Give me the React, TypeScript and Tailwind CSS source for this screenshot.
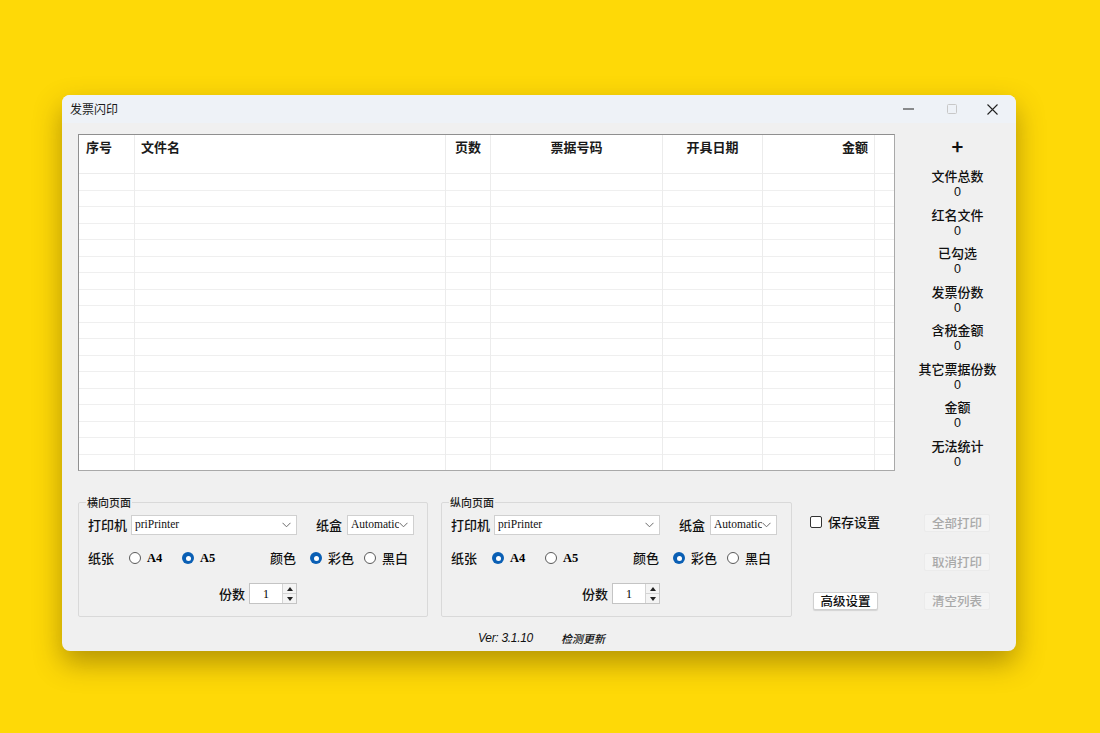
import type { ReactNode } from 'react';

const CJK = '[font-family:"Noto_Sans_CJK_SC","Noto_Sans",sans-serif]';

const columns = [
  { w: 'w-[56px]', label: '序号', align: 'justify-start pl-[7px]' },
  { w: 'w-[311px]', label: '文件名', align: 'justify-start pl-[6px]' },
  { w: 'w-[45px]', label: '页数', align: 'justify-end pr-[9px]' },
  { w: 'w-[172px]', label: '票据号码', align: 'justify-center' },
  { w: 'w-[100px]', label: '开具日期', align: 'justify-center' },
  { w: 'w-[112px]', label: '金额', align: 'justify-end pr-[6px]' },
  { w: 'flex-1', label: '', align: '' },
];

const stats = ['文件总数', '红名文件', '已勾选', '发票份数', '含税金额', '其它票据份数', '金额', '无法统计'];

const rows = Array.from({ length: 18 }, (_, i) => i);

function Chevron() {
  return (
    <svg width="9" height="6" viewBox="0 0 9 6" className="shrink-0">
      <path d="M0.5 0.8 L4.5 4.8 L8.5 0.8" fill="none" stroke="#6b6b6b" strokeWidth="1" />
    </svg>
  );
}

function Select({ value, w }: { value: string; w: string }) {
  return (
    <div
      className={`${w} flex h-[20px] items-center overflow-hidden border border-[#d0d0d0] bg-white pl-[3px] pr-[5px]`}
    >
      <span className="flex-1 overflow-hidden whitespace-nowrap text-[11.5px] leading-none text-[#111] [font-family:'Liberation_Serif',serif]">
        {value}
      </span>
      <Chevron />
    </div>
  );
}

function Radio({ checked, label, w }: { checked: boolean; label: ReactNode; w: string }) {
  return (
    <div className={`${w} flex items-center gap-[6px]`}>
      {checked ? (
        <span className="flex h-[12px] w-[12px] items-center justify-center rounded-full bg-[#0a5fb4]">
          <span className="h-[5px] w-[5px] rounded-full bg-white" />
        </span>
      ) : (
        <span className="h-[12px] w-[12px] rounded-full border border-[#5a5a5a] bg-white" />
      )}
      {label}
    </div>
  );
}

function Spin() {
  return (
    <div className="flex h-[21px] w-[48px] border border-[#c4c4c4] bg-white">
      <span className="flex flex-1 items-center justify-center text-[12px] [font-family:'Liberation_Serif',serif]">1</span>
      <div className="flex w-[14px] flex-col border-l border-[#d4d4d4] bg-[#f4f4f4]">
        <span className="flex flex-1 items-center justify-center border-b border-[#d4d4d4]">
          <svg width="6" height="4" viewBox="0 0 6 4">
            <path d="M0 4 L3 0 L6 4 Z" fill="#222" />
          </svg>
        </span>
        <span className="flex flex-1 items-center justify-center">
          <svg width="6" height="4" viewBox="0 0 6 4">
            <path d="M0 0 L3 4 L6 0 Z" fill="#222" />
          </svg>
        </span>
      </div>
    </div>
  );
}

const latin = "text-[12.5px] font-bold [font-family:'Liberation_Serif',serif]";
const lbl = 'text-[13px] font-medium text-[#111]';

function PageGroup({ title, a4 }: { title: string; a4: boolean }) {
  return (
    <fieldset className="h-[122px] rounded-[2px] border border-[#d9d9d9] px-[9px] pb-[12px]">
      <legend className="ml-[-2px] px-[1px] text-[11px] font-medium leading-[14px] text-[#222]">{title}</legend>
      <div className="mt-[6px] flex h-[20px] items-center">
        <span className={`${lbl} w-[43px]`}>打印机</span>
        <Select value="priPrinter" w="w-[166px]" />
        <span className={`${lbl} ml-[19px] w-[31px]`}>纸盒</span>
        <Select value="Automatic" w="w-[67px]" />
      </div>
      <div className="mt-[13px] flex h-[20px] items-center">
        <span className={`${lbl} w-[41px]`}>纸张</span>
        <Radio checked={a4} w="w-[53px]" label={<span className={latin}>A4</span>} />
        <Radio checked={!a4} w="w-[88px]" label={<span className={latin}>A5</span>} />
        <span className={`${lbl} w-[40px]`}>颜色</span>
        <Radio checked w="w-[54px]" label={<span className={lbl}>彩色</span>} />
        <Radio checked={false} w="w-[54px]" label={<span className={lbl}>黑白</span>} />
      </div>
      <div className="mt-[15px] flex h-[21px] items-center pl-[131px]">
        <span className={`${lbl} w-[30px]`}>份数</span>
        <Spin />
      </div>
    </fieldset>
  );
}

function Btn({ children, disabled }: { children: ReactNode; disabled?: boolean }) {
  return (
    <div
      className={
        disabled
          ? 'flex h-[18px] w-[66px] items-center justify-center rounded-[2px] border border-[#ebebeb] bg-[#f4f4f4] text-[12.5px] font-medium text-[#a9a9a9]'
          : 'flex h-[18px] w-[65px] items-center justify-center rounded-[2px] border border-[#d0d0d0] bg-white text-[12.5px] font-medium text-[#111] shadow-[0_1px_1px_rgba(0,0,0,0.12)]'
      }
    >
      {children}
    </div>
  );
}

export default function App() {
  return (
    <div className={`h-[733px] w-[1100px] overflow-hidden bg-[#fed907] pl-[62px] pt-[95px] ${CJK}`}>
      <div className="flex h-[556px] w-[954px] flex-col overflow-hidden rounded-[8px] bg-[#f0f0f0] shadow-[0_12px_28px_rgba(90,65,0,0.45)]">
        {/* title bar */}
        <div className="flex h-[28px] items-center bg-[#eef2f7] pl-[8px]">
          <span className="flex-1 text-[12px] text-[#1b1b1b]">发票闪印</span>
          <div className="flex h-full items-center">
            <span className="flex w-[43px] justify-center">
              <svg width="11" height="2" viewBox="0 0 11 2">
                <rect width="11" height="1" y="0.5" fill="#222" />
              </svg>
            </span>
            <span className="flex w-[43px] justify-center">
              <svg width="10" height="10" viewBox="0 0 10 10">
                <rect x="0.5" y="0.5" width="9" height="9" rx="1" fill="none" stroke="#c8c8c8" />
              </svg>
            </span>
            <span className="flex w-[43px] justify-center pr-[4px]">
              <svg width="11" height="11" viewBox="0 0 11 11">
                <path d="M0.5 0.5 L10.5 10.5 M10.5 0.5 L0.5 10.5" stroke="#222" strokeWidth="1.1" />
              </svg>
            </span>
          </div>
        </div>

        <div className="flex flex-1 flex-col pl-[16px]">
          {/* table + stats */}
          <div className="mt-[11px] flex h-[337px]">
            <div className="flex h-full w-[817px] overflow-hidden border border-[#a9a9a9] border-l-[#8f8f8f] border-t-[#8f8f8f] bg-white">
              {columns.map((c, ci) => (
                <div key={ci} className={`${c.w} flex shrink-0 flex-col border-r border-[#ececec] last:border-r-0`}>
                  <div
                    className={`flex h-[39px] shrink-0 items-start border-b border-[#ececec] pt-[4px] ${c.align} text-[13px] font-bold leading-[16px] text-[#1a1a1a]`}
                  >
                    {c.label}
                  </div>
                  {rows.map((r) => (
                    <div key={r} className="h-[16.5px] shrink-0 border-b border-[#efefef]" />
                  ))}
                </div>
              ))}
            </div>
            <div className="flex flex-1 flex-col items-center pl-[4px]">
              <div className="mt-[2px] flex h-[26px] items-center text-[20px] font-bold leading-none text-[#111]">+</div>
              <div className="mt-[11px] flex flex-col items-center">
                {stats.map((s) => (
                  <div key={s} className="flex h-[38.5px] flex-col items-center">
                    <span className="text-[13px] font-medium leading-[17px] text-[#111]">{s}</span>
                    <span className="text-[12.5px] leading-[16px] text-[#111] [font-family:'Liberation_Sans',sans-serif]">0</span>
                  </div>
                ))}
              </div>
            </div>
          </div>

          {/* settings */}
          <div className="mt-[24px] flex">
            <div className="w-[350px]">
              <PageGroup title="横向页面" a4={false} />
            </div>
            <div className="ml-[13px] w-[351px]">
              <PageGroup title="纵向页面" a4 />
            </div>
            <div className="flex pl-[18px]">
              <div className="flex w-[114px] flex-col">
                <div className="mt-[19px] flex h-[16px] items-center gap-[6px]">
                  <span className="h-[12px] w-[12px] rounded-[2px] border border-[#333] bg-white" />
                  <span className="text-[13px] font-medium text-[#111]">保存设置</span>
                </div>
                <div className="mt-[62px] pl-[3px]">
                  <Btn>高级设置</Btn>
                </div>
              </div>
              <div className="mt-[19px] flex flex-col gap-[21px]">
                <Btn disabled>全部打印</Btn>
                <Btn disabled>取消打印</Btn>
                <Btn disabled>清空列表</Btn>
              </div>
            </div>
          </div>

          {/* footer */}
          <div className="mt-[13px] flex h-[16px] items-center pl-[400px] text-[12px] italic text-[#111]">
            <span className="[font-family:'Liberation_Sans_Narrow','Liberation_Sans',sans-serif] tracking-[-0.3px]">Ver: 3.1.10</span>
            <span className="ml-[28px] text-[11px] font-medium">检测更新</span>
          </div>
        </div>
      </div>
    </div>
  );
}
